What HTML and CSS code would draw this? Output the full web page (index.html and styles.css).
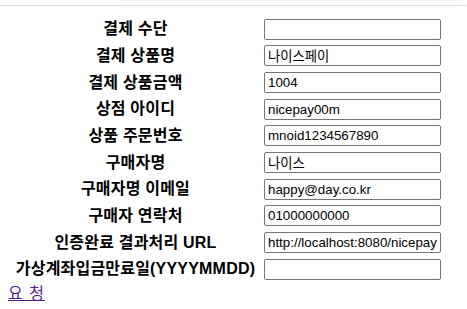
FILE: index.html
```html
<!DOCTYPE html>
<html lang="ko">
  <head>
    <meta charset="UTF-8" />
    <meta name="viewport" content="width=device-width, initial-scale=1.0" />
    <title>결제 요청</title>

    <link rel="stylesheet" href="styles.css">
  </head>

  <body>
    <div class="top-strip"></div>
    <div class="top-rule"></div>

    <form class="pay-form" name="payForm" method="post" action="#">
      <table class="pay-table">
        <tr>
          <th>결제 수단</th>
          <td><input type="text" name="PayMethod" value="" /></td>
        </tr>
        <tr>
          <th>결제 상품명</th>
          <td><input type="text" name="GoodsName" value="나이스페이" /></td>
        </tr>
        <tr>
          <th>결제 상품금액</th>
          <td><input type="text" name="Amt" value="1004" /></td>
        </tr>
        <tr>
          <th>상점 아이디</th>
          <td><input type="text" name="MID" value="nicepay00m" /></td>
        </tr>
        <tr>
          <th>상품 주문번호</th>
          <td><input type="text" name="Moid" value="mnoid1234567890" /></td>
        </tr>
        <tr>
          <th>구매자명</th>
          <td><input type="text" name="BuyerName" value="나이스" /></td>
        </tr>
        <tr>
          <th>구매자명 이메일</th>
          <td><input type="text" name="BuyerEmail" value="happy@day.co.kr" /></td>
        </tr>
        <tr>
          <th>구매자 연락처</th>
          <td><input type="text" name="BuyerTel" value="01000000000" /></td>
        </tr>
        <tr>
          <th>인증완료 결과처리 URL</th>
          <td><input type="text" name="ReturnURL" value="http://localhost:8080/nicepay" /></td>
        </tr>
        <tr>
          <th>가상계좌입금만료일(YYYYMMDD)</th>
          <td><input type="text" name="VbankExpDate" value="" /></td>
        </tr>
      </table>
      <a href="#" class="req-link">요 청</a>
    </form>
  </body>
</html>
```

FILE: styles.css
```css
body {
  margin: 0;
  font-family: "Liberation Sans", "Noto Sans CJK KR", sans-serif;
  background: #fff;
}

.top-strip {
  height: 1px;
  width: 340px;
  margin-left: 120px;
  background: #f4f4f4;
}

.top-rule {
  height: 1px;
  width: 466px;
  margin-top: 4px;
  background: #dcdcdc;
}

.pay-form {
  margin: 0 8px;
}

.pay-table {
  margin-top: 9px;
  border-spacing: 2px;
}

.pay-table th,
.pay-table td {
  padding: 1px;
  height: 22.67px;
  line-height: 22px;
  vertical-align: middle;
}

.pay-table th {
  width: 249px;
  font-size: 16px;
  font-weight: bold;
  letter-spacing: 0.2px;
  text-align: center;
  color: #000;
  white-space: nowrap;
}

.pay-table input {
  display: block;
  box-sizing: border-box;
  width: 177px;
  height: 21px;
  margin: 0;
  padding: 1px 2px 1px 3px;
  border: 1px solid #767676;
  border-radius: 2px;
  font-family: "Liberation Sans", "Noto Sans CJK KR", sans-serif;
  font-size: 13.33px;
  color: #000;
}

.req-link {
  display: inline-block;
  margin-top: 1px;
  font-size: 16px;
  line-height: 18px;
  letter-spacing: 1px;
  color: #551a8b;
}
```
